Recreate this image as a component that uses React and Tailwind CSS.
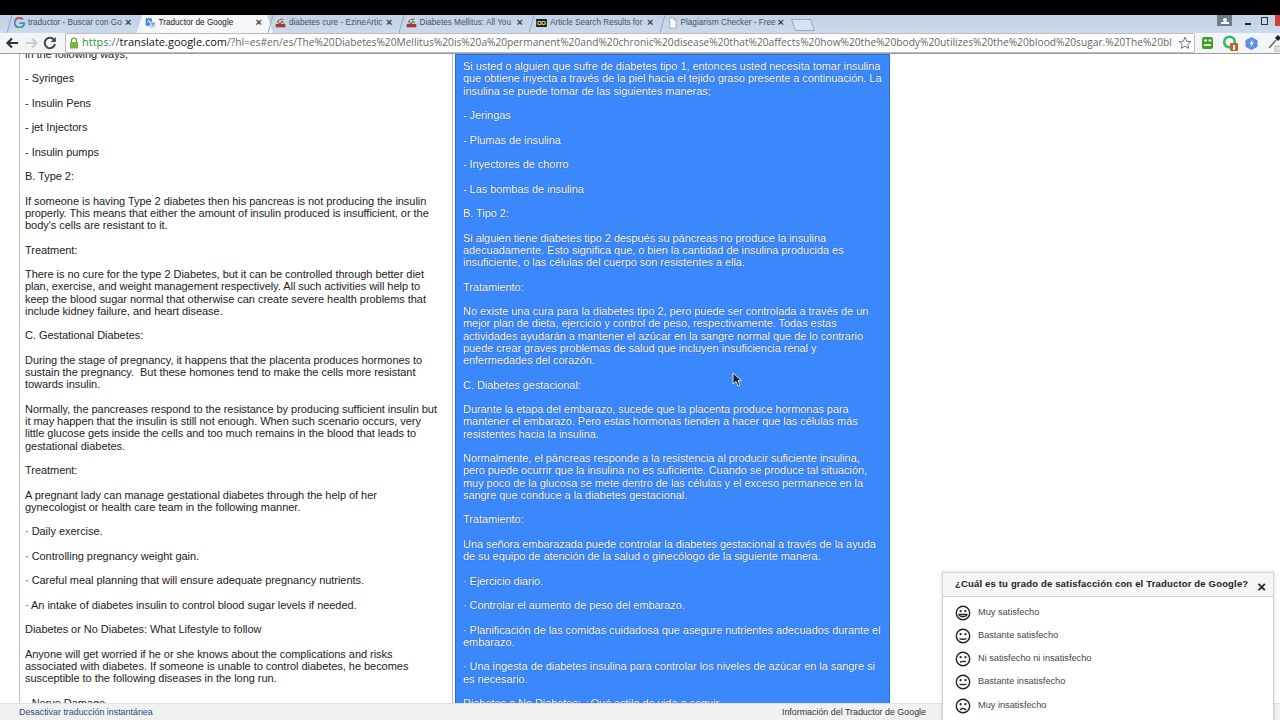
import React from "react";

const F = { fontFamily: '"Liberation Sans", Arial, sans-serif' };

const left = [
  "in the following ways,", "- Syringes", "- Insulin Pens", "- jet Injectors", "- Insulin pumps", "B. Type 2:",
  "If someone is having Type 2 diabetes then his pancreas is not producing the insulin\nproperly. This means that either the amount of insulin produced is insufficient, or the\nbody's cells are resistant to it.",
  "Treatment:",
  "There is no cure for the type 2 Diabetes, but it can be controlled through better diet\nplan, exercise, and weight management respectively. All such activities will help to\nkeep the blood sugar normal that otherwise can create severe health problems that\ninclude kidney failure, and heart disease.",
  "C. Gestational Diabetes:",
  "During the stage of pregnancy, it happens that the placenta produces hormones to\nsustain the pregnancy.  But these homones tend to make the cells more resistant\ntowards insulin.",
  "Normally, the pancreases respond to the resistance by producing sufficient insulin but\nit may happen that the insulin is still not enough. When such scenario occurs, very\nlittle glucose gets inside the cells and too much remains in the blood that leads to\ngestational diabetes.",
  "Treatment:",
  "A pregnant lady can manage gestational diabetes through the help of her\ngynecologist or health care team in the following manner.",
  "· Daily exercise.", "· Controlling pregnancy weight gain.", "· Careful meal planning that will ensure adequate pregnancy nutrients.",
  "· An intake of diabetes insulin to control blood sugar levels if needed.",
  "Diabetes or No Diabetes: What Lifestyle to follow",
  "Anyone will get worried if he or she knows about the complications and risks\nassociated with diabetes. If someone is unable to control diabetes, he becomes\nsusceptible to the following diseases in the long run.",
  "· Nerve Damage",
];

const right = [
  "Si usted o alguien que sufre de diabetes tipo 1, entonces usted necesita tomar insulina\nque obtiene inyecta a través de la piel hacia el tejido graso presente a continuación. La\ninsulina se puede tomar de las siguientes maneras;",
  "- Jeringas", "- Plumas de insulina", "- Inyectores de chorro", "- Las bombas de insulina", "B. Tipo 2:",
  "Si alguien tiene diabetes tipo 2 después su páncreas no produce la insulina\nadecuadamente. Esto significa que, o bien la cantidad de insulina producida es\ninsuficiente, o las células del cuerpo son resistentes a ella.",
  "Tratamiento:",
  "No existe una cura para la diabetes tipo 2, pero puede ser controlada a través de un\nmejor plan de dieta, ejercicio y control de peso, respectivamente. Todas estas\nactividades ayudarán a mantener el azúcar en la sangre normal que de lo contrario\npuede crear graves problemas de salud que incluyen insuficiencia renal y\nenfermedades del corazón.",
  "C. Diabetes gestacional:",
  "Durante la etapa del embarazo, sucede que la placenta produce hormonas para\nmantener el embarazo. Pero estas hormonas tienden a hacer que las células más\nresistentes hacia la insulina.",
  "Normalmente, el páncreas responde a la resistencia al producir suficiente insulina,\npero puede ocurrir que la insulina no es suficiente. Cuando se produce tal situación,\nmuy poco de la glucosa se mete dentro de las células y el exceso permanece en la\nsangre que conduce a la diabetes gestacional.",
  "Tratamiento:",
  "Una señora embarazada puede controlar la diabetes gestacional a través de la ayuda\nde su equipo de atención de la salud o ginecólogo de la siguiente manera.",
  "· Ejercicio diario.", "· Controlar el aumento de peso del embarazo.",
  "· Planificación de las comidas cuidadosa que asegure nutrientes adecuados durante el\nembarazo.",
  "· Una ingesta de diabetes insulina para controlar los niveles de azúcar en la sangre si\nes necesario.",
  "Diabetes o No Diabetes: ¿Qué estilo de vida a seguir",
];

const Favicon = ({ kind }) => {
  if (kind === "g")
    return (
      <svg width="11" height="11" viewBox="0 0 16 16" className="shrink-0">
        <path d="M13 3.5A7 7 0 1 0 15 9H8" fill="none" stroke="#4a86d8" strokeWidth="2.6" />
        <path d="M13 3.5A7 7 0 0 0 2 4.5" fill="none" stroke="#d9503f" strokeWidth="2.6" />
        <path d="M2.5 12.5A7 7 0 0 0 12 14" fill="none" stroke="#4ba35a" strokeWidth="2.6" />
      </svg>
    );
  if (kind === "t")
    return (
      <svg width="11" height="12" viewBox="0 0 16 16" className="shrink-0">
        <rect x="1" y="1" width="9" height="11" rx="1" fill="#3f7fe0" />
        <rect x="7" y="6" width="8" height="9" rx="1" fill="#c8d6ea" />
        <path d="M3.5 8 5.5 3.5 7.5 8" fill="none" stroke="#fff" strokeWidth="1.2" />
        <path d="M9 9h5M11.5 8v1M10 13l3-4" stroke="#4a6fa8" fill="none" strokeWidth=".9" />
      </svg>
    );
  if (kind === "e")
    return (
      <svg width="11" height="11" viewBox="0 0 16 16" className="shrink-0">
        <rect x="1" y="1" width="14" height="14" fill="#e6dccd" />
        <path d="M3 8c2-5 8-6 10-4M5 7l2 4 3-5 3 3" stroke="#556b88" fill="none" strokeWidth="1.5" />
        <rect x="1" y="10" width="14" height="5" fill="#a7382d" />
      </svg>
    );
  if (kind === "a")
    return (
      <svg width="11" height="8" viewBox="0 0 16 12" className="shrink-0">
        <rect x="0" y="0" width="16" height="12" fill="#1d1d1d" />
        <circle cx="5" cy="6" r="2.5" fill="none" stroke="#e9d27a" strokeWidth="1.6" />
        <circle cx="11" cy="6" r="2.5" fill="none" stroke="#e9d27a" strokeWidth="1.6" />
      </svg>
    );
  return (
    <svg width="11" height="12" viewBox="0 0 12 15" className="shrink-0">
      <path d="M2.500 1h5l3 3v10h-8z" fill="#fff" stroke="#8e9aa8" />
      <path d="M7.500 1v3h3" fill="none" stroke="#8e9aa8" />
    </svg>
  );
};

const tabs = [
  { t: "traductor - Buscar con Go", k: "g" },
  { t: "Traductor de Google", k: "t", active: true },
  { t: "diabetes cure - EzineArtic", k: "e" },
  { t: "Diabetes Mellitus: All You", k: "e" },
  { t: "Article Search Results for", k: "a" },
  { t: "Plagiarism Checker - Free", k: "p" },
];

const Tab = ({ t, k, active }) => (
  <div className="w-[130.5px] h-[18px] shrink-0 relative flex items-center pb-[2px]">
    {active && <div className="absolute -left-[2px] -right-[4px] top-0 bottom-0 bg-[#f4f6f9] [clip-path:polygon(0_100%,6px_0,calc(100%-6px)_0,100%_100%)]" />}
    {!active && (
      <svg width="6" height="18" viewBox="0 0 6 18" className="absolute -left-[1px] top-0">
        <path d="M0 18 5 0" stroke="#94a7bf" strokeWidth="1" />
      </svg>
    )}
    <div className="relative w-[114px] flex items-center pl-[6px] gap-[3px] text-[8.2px] text-[#4b5158]">
      <Favicon kind={k} />
      <span className={`flex-1 whitespace-nowrap ${active ? "text-[#222]" : ""}`}>{t}</span>
    </div>
    <span className="absolute left-[117px] top-[2px] text-[11px] font-bold text-[#444] leading-none">×</span>
  </div>
);

const ExtIcons = () => (
  <div className="flex items-center ml-[6px] shrink-0">
    <svg width="14" height="14" viewBox="0 0 14 14" className="shrink-0"><rect x="1" y="1" width="11" height="12" rx="2" fill="#3f9c2e" /><rect x="3" y="3.5" width="3" height="2" fill="#e8f2c8" /><rect x="7.5" y="3.5" width="3" height="2" fill="#e8f2c8" /><rect x="3" y="8" width="7" height="2" fill="#e8f2c8" /></svg>
    <svg width="17" height="18" viewBox="0 0 17 18" className="shrink-0 ml-[7px]"><circle cx="7.500" cy="8" r="5.300" fill="none" stroke="#34b870" strokeWidth="2.600" /><rect x="8" y="9" width="8" height="8" rx="1" fill="#b96a20" /><rect x="11" y="11" width="2" height="5" fill="#fff" /></svg>
    <svg width="15" height="15" viewBox="0 0 15 15" className="shrink-0 ml-[5px]"><path d="M7.500 1 13.500 4.200v6.600L7.500 14 1.500 10.800V4.200z" fill="#5d8fe0" /><path d="M8.500 3.500 5.500 8h2l-1 3.500 3.500-5h-2z" fill="#fff" /></svg>
    <svg width="16" height="18" viewBox="0 0 16 18" className="shrink-0 ml-[8px]"><path d="M2 14 9 6" stroke="#666" strokeWidth="1.400" /><path d="M8 4l3-3 3 3-3 3z" fill="#222" /><rect x="8" y="12" width="8" height="6" fill="#ddd" stroke="#999" strokeWidth=".6" /></svg>
  </div>
);

const Face = ({ mouth }) => (
  <svg width="16" height="16" viewBox="0 0 16 16" className="shrink-0">
    <circle cx="8" cy="8" r="6.700" fill="none" stroke="#222" strokeWidth="1.400" />
    <circle cx="5.600" cy="6.200" r="1.100" fill="#222" />
    <circle cx="10.400" cy="6.200" r="1.100" fill="#222" />
    <path d={mouth} fill="none" stroke="#222" strokeWidth="1.300" />
  </svg>
);

const answers = [
  ["Muy satisfecho", "M4 9.500h8c-.5 3-7.500 3-8 0z"],
  ["Bastante satisfecho", "M4.500 10.500c1.500 1 5.500 1 7 0"],
  ["Ni satisfecho ni insatisfecho", "M5 11c1.500-.4 4.500-.6 6-.4"],
  ["Bastante insatisfecho", "M4.500 10.500h7"],
  ["Muy insatisfecho", "M5 12c1.500-2 4.500-2 6 0"],
];

const Paragraphs = ({ items }) => (
  <div className="flex flex-col gap-[12.25px]">
    {items.map((p, i) => (
      <p key={i} className="whitespace-pre leading-[12.25px]">{p}</p>
    ))}
  </div>
);

export default function App() {
  return (
    <div style={F} className="w-[1280px] h-[720px] overflow-hidden bg-white flex flex-col relative">
      <div className="h-[15px] bg-black shrink-0" />
      <div className="h-[18px] bg-gradient-to-b from-[#c0d2e8] to-[#cbdaec] shrink-0 flex items-end pl-[8px] relative">
        {tabs.map((t) => <Tab key={t.t} {...t} />)}
        <div className="w-[20px] h-[12px] ml-[2px] mb-[2px] border border-[#94a7bf] bg-[#d5e2f1] [transform:skewX(20deg)] shrink-0" />
        <div className="flex-1" />
        <div className="self-start flex items-start h-[11px] text-[#333]">
          <div className="w-[15px] h-[11px] bg-[#707c89] flex flex-col items-center justify-center shrink-0">
            <div className="w-[4px] h-[4px] rounded-full bg-white" />
            <div className="w-[8px] h-[2px] bg-white" />
          </div>
          <div className="w-[6px] h-[2px] bg-[#222] mt-[8px] ml-[13px] shrink-0" />
          <div className="w-[7px] h-[8px] border border-[#333] mt-[2px] ml-[10px] shrink-0" />
          <div className="w-[5px] h-[11px] bg-[#c9423b] ml-[7px] shrink-0" />
        </div>
      </div>
      <div className="h-[21px] bg-[#f3f4f6] border-b border-[#9c9c9c] shrink-0 flex items-center pl-[5px] relative overflow-hidden">
        <svg width="14" height="14" viewBox="0 0 14 14" className="shrink-0"><path d="M13 7H3M7 2.500 2.500 7 7 11.500" fill="none" stroke="#333" strokeWidth="2.200" /></svg>
        <svg width="14" height="14" viewBox="0 0 14 14" className="shrink-0 ml-[6px]"><path d="M1 7h10M7 2.500 11.500 7 7 11.500" fill="none" stroke="#c9ccd0" strokeWidth="2" /></svg>
        <svg width="14" height="14" viewBox="0 0 14 14" className="shrink-0 ml-[4px]"><path d="M11.500 4.500A5.200 5.200 0 1 0 12 8" fill="none" stroke="#444" strokeWidth="2" /><path d="M12.800 1v5h-5z" fill="#444" /></svg>
        <div className="w-[1130px] h-[20px] ml-[8px] bg-white border border-[#b8bcc2] rounded-[2px] flex items-center pl-[2px] pr-[2px] overflow-hidden shrink-0">
          <svg width="10" height="12" viewBox="0 0 10 12" className="shrink-0 ml-[1px]"><path d="M2.500 5V3.500a2.500 2.500 0 0 1 5 0V5" fill="none" stroke="#5d9a3a" strokeWidth="1.200" /><rect x="1" y="5" width="8" height="6.500" fill="#7cb342" /></svg>
          <div className="flex-1 overflow-hidden whitespace-nowrap text-[10.2px] leading-[14px] pb-[2px] ml-[3px] text-[#666]" style={{ fontFamily: '"Open Sans", sans-serif' }}>
            <span className="text-[#2f8f3a] text-[11px]">https</span><span className="text-[11px]">://</span><span className="text-[#111] text-[11px]">translate.google.com</span>/?hl=es#en/es/The%20Diabetes%20Mellitus%20is%20a%20permanent%20and%20chronic%20disease%20that%20affects%20how%20the%20body%20utilizes%20the%20blood%20sugar.%20The%20bl
          </div>
          <svg width="14" height="14" viewBox="0 0 24 24" className="shrink-0 ml-[2px]"><path d="M12 2l3 7 7 .6-5.300 4.600 1.600 7L12 17.500 5.700 21.200l1.600-7L2 9.600 9 9z" fill="none" stroke="#666" strokeWidth="1.600" /></svg>
        </div>
        <ExtIcons />
      </div>

      <div className="flex-1 min-h-0 flex pl-[19px] text-[11px] tracking-[-0.04px] overflow-hidden">
        <div className="w-[434px] h-[660px] shrink-0 border-l border-r border-[#c0c0c0] pl-[5px] overflow-hidden text-[#222]">
          <div className="-mt-[6.500px]"><Paragraphs items={left} /></div>
        </div>
        <div className="w-[435px] h-[650px] ml-[2px] shrink-0 bg-[#3a88fb] border border-[#2a6fd0] pl-[7px] pt-[5px] overflow-hidden text-white tracking-[-0.06px] [text-shadow:0_0_1px_rgba(0,30,90,.8)]">
          <Paragraphs items={right} />
        </div>
      </div>

      <div className="absolute left-0 right-0 bottom-0 h-[17px] bg-[#f1f1f1] border-t border-[#e2e2e2] pt-[1px] text-[8.9px] flex items-center justify-between">
        <span className="ml-[19px] text-[#2a4a7a]">Desactivar traducción instantánea</span>
        <span className="mr-[354px] text-[#333]">Información del Traductor de Google</span>
      </div>

      <div className="absolute left-[942px] top-[572px] w-[332px] h-[150px] bg-white border border-[#d4d4d4] shadow-[0_0_3px_rgba(0,0,0,.2)]">
        <div className="h-[24px] bg-[#f5f5f5] border-b border-[#cfcfcf] flex items-center pl-[12px] relative">
          <span className="text-[9.5px] font-bold text-[#222] tracking-[.17px] whitespace-nowrap">¿Cuál es tu grado de satisfacción con el Traductor de Google?</span>
          <span className="absolute right-[7px] top-[6px] text-[15px] font-bold leading-none text-[#222]">×</span>
        </div>
        <div className="flex flex-col gap-[7.250px] pt-[7.500px] pl-[12px]">
          {answers.map(([a, m]) => (
            <div key={a} className="flex items-center gap-[7px] h-[16px] text-[9.200px] text-[#444]">
              <Face mouth={m} />
              <span>{a}</span>
            </div>
          ))}
        </div>
      </div>

      <svg width="10" height="15" viewBox="0 0 10 15" className="absolute left-[732px] top-[372px]">
        <path d="M1 1v11l3-2.500 2 4.500 2-1-2-4.300h3.500z" fill="#222" stroke="#fff" strokeWidth=".8" />
      </svg>
    </div>
  );
}
